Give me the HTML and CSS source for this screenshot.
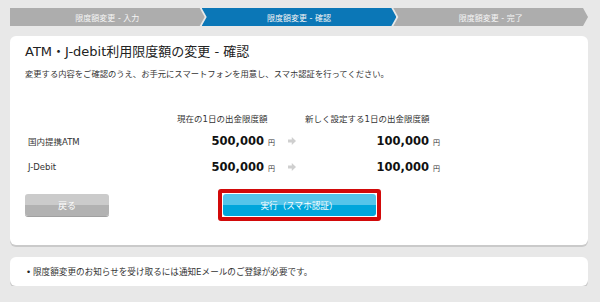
FILE: index.html
```html
<!DOCTYPE html>
<html lang="ja">
<head>
    <meta charset="UTF-8">
    <meta name="viewport" content="width=device-width, initial-scale=1.0">
    <title>限度額変更 - 確認</title>
    <link rel="stylesheet" href="styles.css">
</head>
<body>
    <div class="page">
        <div class="steps">
            <div class="step">限度額変更 - 入力</div>
            <div class="step current">限度額変更 - 確認</div>
            <div class="step">限度額変更 - 完了</div>
        </div>

        <div class="card main">
            <h1 class="title">ATM・J-debit利用限度額の変更 - 確認</h1>
            <p class="lead">変更する内容をご確認のうえ、お手元にスマートフォンを用意し、スマホ認証を行ってください。</p>

            <div class="limits">
                <div></div>
                <div class="head head-now">現在の1日の出金限度額</div>
                <div></div>
                <div class="head head-new">新しく設定する1日の出金限度額</div>

                <div class="label">国内提携ATM</div>
                <div class="amount now"><b>500,000</b><span class="yen">円</span></div>
                <div class="arrow"><svg width="8" height="8" viewBox="0 0 8 8"><polygon points="0,2.6 3.8,2.6 3.8,0 8,4 3.8,8 3.8,5.4 0,5.4" fill="#cfcfcf"/></svg></div>
                <div class="amount new"><b>100,000</b><span class="yen">円</span></div>

                <div class="label">J-Debit</div>
                <div class="amount now"><b>500,000</b><span class="yen">円</span></div>
                <div class="arrow"><svg width="8" height="8" viewBox="0 0 8 8"><polygon points="0,2.6 3.8,2.6 3.8,0 8,4 3.8,8 3.8,5.4 0,5.4" fill="#cfcfcf"/></svg></div>
                <div class="amount new"><b>100,000</b><span class="yen">円</span></div>
            </div>

            <div class="actions">
                <button class="btn back">戻る</button>
                <div class="highlight">
                    <button class="btn submit">実行（スマホ認証）</button>
                </div>
            </div>
        </div>

        <div class="card note">
            <ul class="notes">
                <li>限度額変更のお知らせを受け取るには通知Eメールのご登録が必要です。</li>
            </ul>
        </div>
    </div>
</body>
</html>
```

FILE: styles.css
```css
body {
    margin: 0;
    background: #e8e8e8;
    color: #333;
    font-family: "DejaVu Sans", "Noto Sans CJK JP", sans-serif;
}
.page {
    width: 578px;
    padding: 8px 0 0 10px;
}

/* steps */
.steps {
    display: flex;
    height: 18px;
}
.step {
    flex: 1;
    display: flex;
    align-items: center;
    justify-content: center;
    background: #adadad;
    color: #f5f5f5;
    font-size: 8px;
    clip-path: polygon(0 0, calc(100% - 5px) 0, 100% 50%, calc(100% - 5px) 100%, 0 100%, 5px 50%);
}
.step:first-child {
    clip-path: polygon(0 0, calc(100% - 5px) 0, 100% 50%, calc(100% - 5px) 100%, 0 100%);
}
.step + .step {
    margin-left: -3px;
}
.step.current {
    background: #0b77b7;
}

/* cards */
.card {
    background: #fff;
    border-radius: 6px;
    box-shadow: 0 2px 0 #cacaca;
}
.main {
    margin-top: 10px;
    padding: 7px 15px 24px;
}
.title {
    margin: 0;
    font-size: 13px;
    line-height: 18px;
    font-weight: normal;
    color: #222;
}
.lead {
    margin: 6px 0 0;
    font-size: 8.3px;
    line-height: 14px;
}

/* limits table */
.limits {
    display: grid;
    grid-template-columns: 145px 108px 22px 145px;
    grid-template-rows: 20px 25px 27px;
    align-items: center;
    margin-top: 27px;
    font-size: 8.5px;
}
.head-now {
    padding-left: 7px;
}
.head-new {
    padding-left: 5px;
}
.label {
    padding-left: 3px;
}
.amount {
    display: flex;
    justify-content: flex-end;
    align-items: baseline;
}
.amount b {
    font-size: 11.5px;
    color: #111;
}
.amount.now {
    padding-right: 3px;
}
.amount.new {
    padding-right: 5px;
}
.yen {
    font-size: 7px;
    margin-left: 4px;
}
.arrow {
    display: flex;
    padding-left: 10px;
}

/* buttons */
.actions {
    display: grid;
    grid-template-columns: 1fr auto 1fr;
    align-items: center;
    margin-top: 9px;
}
.btn {
    height: 22px;
    border: none;
    border-radius: 3px;
    color: #fff;
    font-family: inherit;
    cursor: pointer;
}
.back {
    justify-self: start;
    width: 84px;
    font-size: 9px;
    background: linear-gradient(#cbcbcb 0 50%, #b2b2b2 50% 100%);
    box-shadow: 0 1px 0 #a0a0a0;
}
.highlight {
    border: 4px solid #d20a0a;
    border-radius: 3px;
    padding: 1px;
    background: #fff;
    display: flex;
}
.submit {
    width: 153px;
    font-size: 8.6px;
    background: linear-gradient(#55c5ea 0 50%, #00a6db 50% 100%);
}

/* note */
.note {
    margin-top: 12px;
    padding: 8px 15px 7px;
}
.notes {
    margin: 0;
    padding: 0;
    list-style: none;
    font-size: 8.6px;
    line-height: 14px;
}
.notes li::before {
    content: "•";
    display: inline-block;
    width: 7px;
    padding-left: 1px;
    color: #222;
}
```
